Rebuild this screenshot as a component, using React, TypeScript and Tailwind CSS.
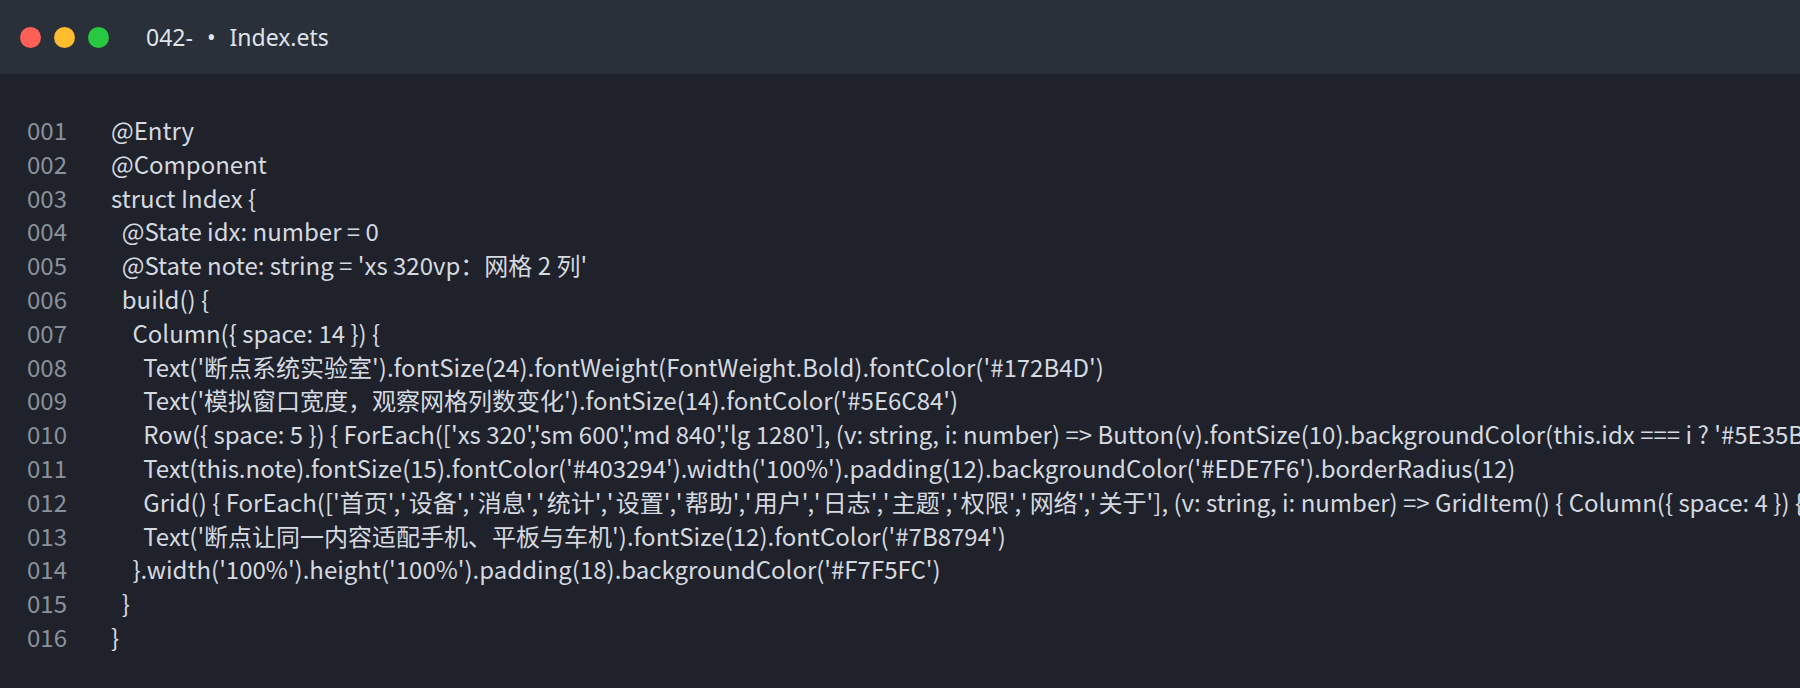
const lines: string[] = [
  "@Entry",
  "@Component",
  "struct Index {",
  "  @State idx: number = 0",
  "  @State note: string = 'xs 320vp：网格 2 列'",
  "  build() {",
  "    Column({ space: 14 }) {",
  "      Text('断点系统实验室').fontSize(24).fontWeight(FontWeight.Bold).fontColor('#172B4D')",
  "      Text('模拟窗口宽度，观察网格列数变化').fontSize(14).fontColor('#5E6C84')",
  "      Row({ space: 5 }) { ForEach(['xs 320','sm 600','md 840','lg 1280'], (v: string, i: number) => Button(v).fontSize(10).backgroundColor(this.idx === i ? '#5E35B1' : '#D1C4E9').fontColor(this.idx === i ? '#FFFFFF' : '#311B92').onClick(() => { this.idx = i }) }) }",
  "      Text(this.note).fontSize(15).fontColor('#403294').width('100%').padding(12).backgroundColor('#EDE7F6').borderRadius(12)",
  "      Grid() { ForEach(['首页','设备','消息','统计','设置','帮助','用户','日志','主题','权限','网络','关于'], (v: string, i: number) => GridItem() { Column({ space: 4 }) { Text(v).fontSize(12) } }) }",
  "      Text('断点让同一内容适配手机、平板与车机').fontSize(12).fontColor('#7B8794')",
  "    }.width('100%').height('100%').padding(18).backgroundColor('#F7F5FC')",
  "  }",
  "}",
];

// the array of CJK labels sits a little looser in the reference than plain spaces allow
function Code({ text }: { text: string }) {
  const parts = text.split(/(','(?=[\u4e00-\u9fff]))/);
  return (
    <span className="whitespace-pre text-[#d5d9e0]">
      {parts.map((p, i) =>
        p === "','" ? (
          <span key={i} className="tracking-[2.2px]">{p}</span>
        ) : (
          <span key={i}>{p}</span>
        )
      )}
    </span>
  );
}

export default function App() {
  return (
    <div className="h-[688px] w-[1800px] overflow-hidden bg-[#1f222a]">
      <div className="flex h-[74px] items-center bg-[#2a3039] pl-[20px]">
        <div className="flex gap-[13px]">
          <span className="h-[21px] w-[21px] rounded-full bg-[#ff5f57]" />
          <span className="h-[21px] w-[21px] rounded-full bg-[#febc2e]" />
          <span className="h-[21px] w-[21px] rounded-full bg-[#28c840]" />
        </div>
        <div className="ml-[37px] flex items-center text-[23px] text-[#dfe3ea] [font-family:'Noto_Sans',sans-serif]">
          <span>042-</span>
          <span className="mx-[14px]">•</span>
          <span>Index.ets</span>
        </div>
      </div>
      <div className="pt-[39px] text-[24px] leading-[33.8px] [font-family:'Noto_Sans_CJK_SC',sans-serif]">
        {lines.map((line, i) => (
          <div key={i} className="flex">
            <span className="w-[111px] shrink-0 pl-[27px] text-[#8b919a]">{String(i + 1).padStart(3, "0")}</span>
            <Code text={line} />
          </div>
        ))}
      </div>
    </div>
  );
}
